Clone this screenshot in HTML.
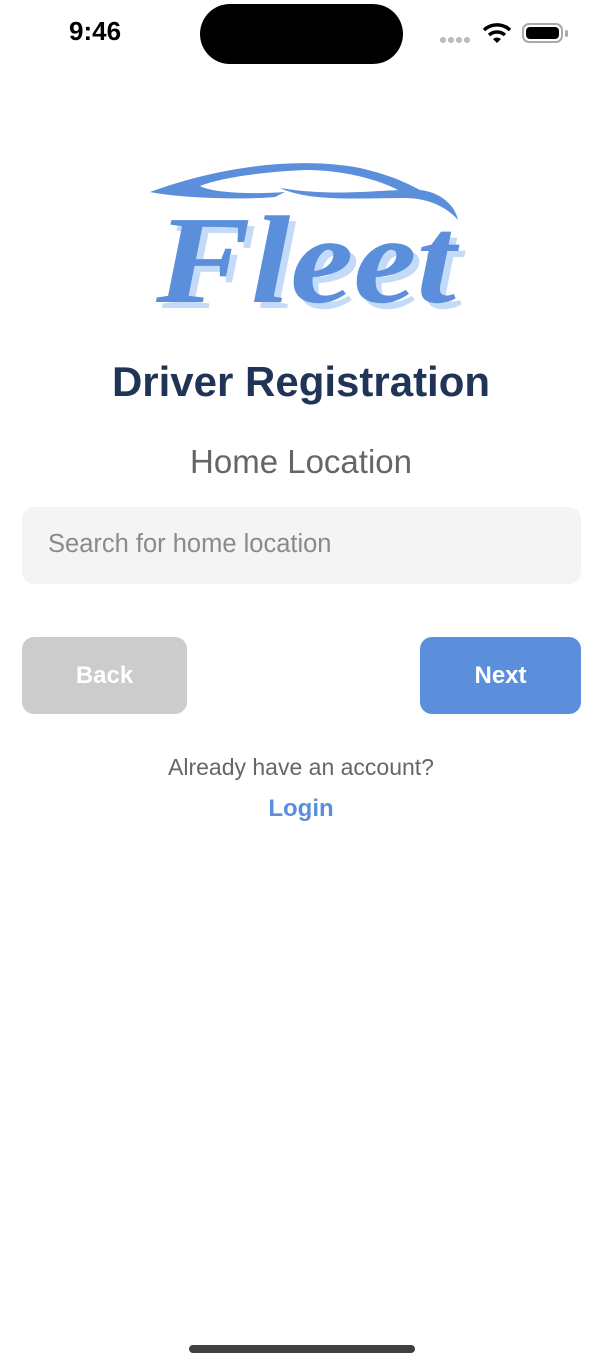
<!DOCTYPE html>
<html><head><meta charset="utf-8"><style>
body{margin:0;width:616px;height:1358px;background:#fff;font-family:"Liberation Sans",sans-serif;position:relative;overflow:hidden}
.abs{position:absolute}
.d{width:6px;height:6px;border-radius:3px;background:#bbb}
</style></head><body>
<div class="abs" style="left:69px;top:16px;font-size:26px;font-weight:bold;color:#000">9:46</div>
<div class="abs" style="left:200px;top:4px;width:203px;height:60px;background:#000;border-radius:30px"></div>
<div class="abs" style="left:440px;top:37px;display:flex;gap:2px"><div class="d"></div><div class="d"></div><div class="d"></div><div class="d"></div></div>
<svg class="abs" style="left:482px;top:22px" width="30" height="22" viewBox="0 0 30 22"><path d="M2 8 A19 19 0 0 1 28 8" stroke="#000" stroke-width="3.5" fill="none"/><path d="M7 13 A12 12 0 0 1 23 13" stroke="#000" stroke-width="3.5" fill="none"/><path d="M11 17 L15 21 L19 17 A6 6 0 0 0 11 17Z" fill="#000"/></svg>
<div class="abs" style="left:522px;top:23px;width:41px;height:20px;border:2px solid #aaa;border-radius:7px;box-sizing:border-box;padding:2px"><div style="width:100%;height:100%;background:#000;border-radius:4px"></div></div>
<div class="abs" style="left:565px;top:30px;width:3px;height:7px;background:#aaa;border-radius:2px"></div>
<svg class="abs" style="left:140px;top:150px" width="340" height="170" viewBox="0 0 340 170">
<path d="M10 42 C70 20 150 5 220 18 C250 25 265 32 280 40 L258 40 C235 28 200 20 165 20 C120 22 80 28 60 36 C75 44 120 44 145 42 L135 47 C100 50 40 48 10 42Z" fill="#5b8fdc"/>
<path d="M140 38 C200 48 250 38 280 40 C300 42 315 55 318 70 C305 55 285 48 265 48 C220 48 170 52 140 38Z" fill="#5b8fdc"/>
<text x="22" y="158" textLength="300" lengthAdjust="spacingAndGlyphs" font-family="Liberation Serif,serif" font-style="italic" font-weight="bold" font-size="125" fill="#c3dbf8">Fleet</text>
<text x="16" y="152" textLength="300" lengthAdjust="spacingAndGlyphs" font-family="Liberation Serif,serif" font-style="italic" font-weight="bold" font-size="125" fill="#5b8fdc">Fleet</text>
</svg>
<div class="abs" style="left:0;width:602px;top:358px;text-align:center;font-size:42px;font-weight:bold;color:#1f3456">Driver Registration</div>
<div class="abs" style="left:0;width:602px;top:443px;text-align:center;font-size:33px;color:#666">Home Location</div>
<div class="abs" style="left:22px;top:507px;width:559px;height:77px;background:#f4f4f4;border-radius:12px"></div>
<div class="abs" style="left:48px;top:530px;font-size:25.5px;color:#8a8a8a">Search for home location</div>
<div class="abs" style="left:22px;top:637px;width:165px;height:77px;background:#cccccc;border-radius:12px;color:#fff;font-size:24px;font-weight:bold;text-align:center;line-height:77px">Back</div>
<div class="abs" style="left:420px;top:637px;width:161px;height:77px;background:#5b8fdc;border-radius:12px;color:#fff;font-size:24px;font-weight:bold;text-align:center;line-height:77px">Next</div>
<div class="abs" style="left:0;width:602px;top:754px;text-align:center;font-size:23px;color:#666">Already have an account?</div>
<div class="abs" style="left:0;width:602px;top:795px;text-align:center;font-size:24px;font-weight:bold;color:#5b8fdc">Login</div>
<div class="abs" style="left:189px;top:1345px;width:226px;height:8px;background:#000;border-radius:4px;opacity:.75"></div>
</body></html>
